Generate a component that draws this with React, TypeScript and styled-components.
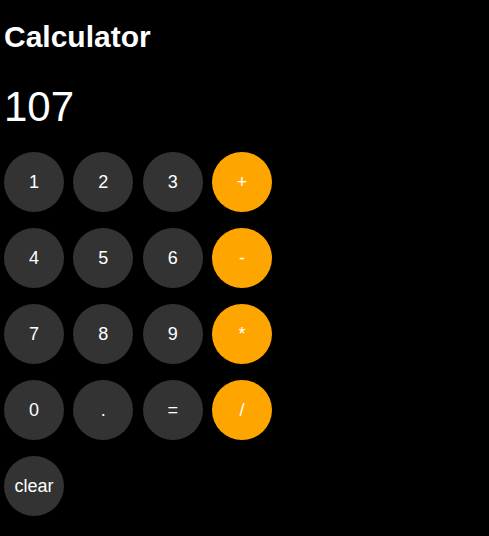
import React, { useState } from "react";
import styled, { createGlobalStyle } from "styled-components";

const GlobalStyle = createGlobalStyle`
  html, body {
    margin: 0;
    padding: 0;
    background: #000;
  }
  body {
    font-family: "Liberation Sans", Arial, sans-serif;
    color: #fff;
  }
`;

const Wrapper = styled.div`
  padding: 20px 4px 0 4px;
  min-height: 516px;
  background: #000;
`;

const Title = styled.h1`
  margin: 0;
  font-size: 30px;
  line-height: 34px;
  font-weight: bold;
  color: #fff;
`;

const Display = styled.div`
  margin-top: 30px;
  font-size: 42px;
  line-height: 46px;
  color: #fff;
`;

const Keypad = styled.div`
  margin-top: 22px;
  display: grid;
  grid-template-columns: repeat(4, 60px);
  column-gap: 9.33px;
  row-gap: 16px;
`;

const Key = styled.button<{ $op?: boolean }>`
  width: 60px;
  height: 60px;
  border: none;
  border-radius: 50%;
  padding: 0;
  background: ${(p) => (p.$op ? "#ffa500" : "#333333")};
  color: #fff;
  font-family: "Liberation Sans", Arial, sans-serif;
  font-size: 18px;
  cursor: pointer;
  display: flex;
  align-items: center;
  justify-content: center;
`;

const rows: string[][] = [
  ["1", "2", "3", "+"],
  ["4", "5", "6", "-"],
  ["7", "8", "9", "*"],
  ["0", ".", "=", "/"],
];

export default function App() {
  const [value, setValue] = useState("107");
  const ops = ["+", "-", "*", "/"];
  return (
    <>
      <GlobalStyle />
      <Wrapper>
        <Title>Calculator</Title>
        <Display>{value}</Display>
        <Keypad>
          {rows.flat().map((k) => (
            <Key key={k} $op={ops.includes(k)} onClick={() => setValue((v) => v)}>
              {k}
            </Key>
          ))}
          <Key onClick={() => setValue("0")}>clear</Key>
        </Keypad>
      </Wrapper>
    </>
  );
}
